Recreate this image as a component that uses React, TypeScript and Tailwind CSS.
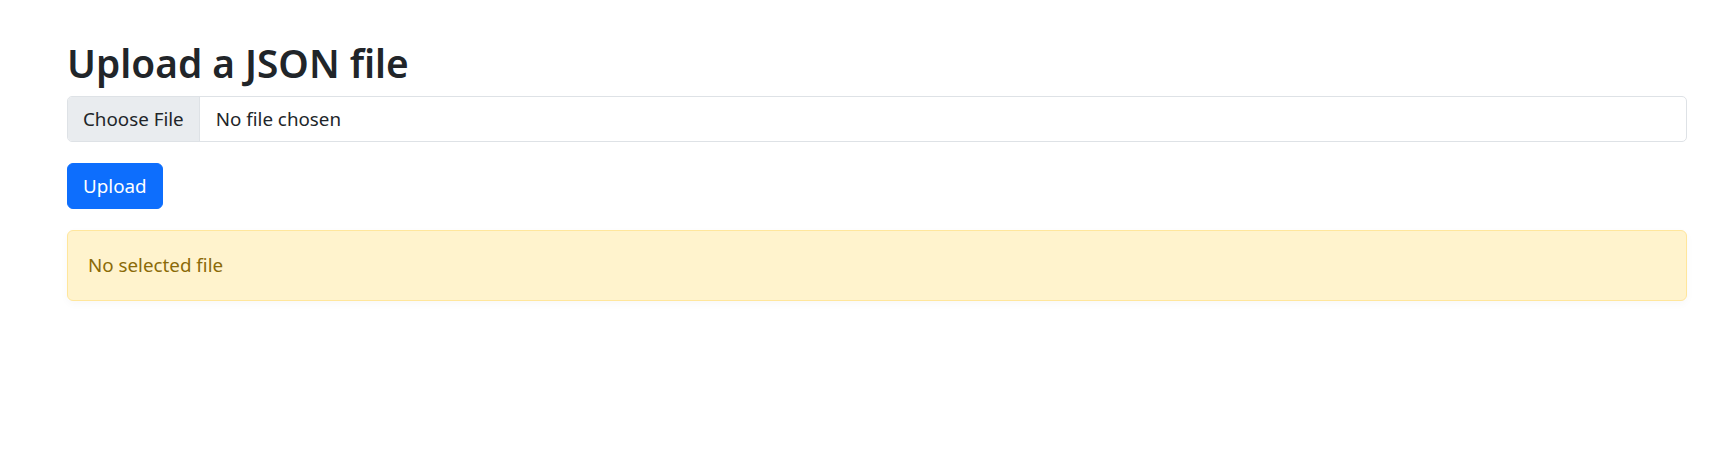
import React from "react";

export default function App() {
  return (
    <div
      className="min-h-[458px] bg-white pl-[67px] pr-[45px] pt-[40px] text-[#212529]"
      style={{ fontFamily: '"Noto Sans", "Open Sans", sans-serif' }}
    >
      <h2 className="mb-[10px] text-[38.8px] font-semibold leading-[46px] text-[#212529]">
        Upload a JSON file
      </h2>
      <div className="flex h-[46px] w-full items-stretch overflow-hidden rounded-[5px] border border-[#dee2e6] bg-white text-[18.8px]">
        <div className="flex items-center border-r border-[#dee2e6] bg-[#e9ecef] px-[15px] text-[#212529]">
          Choose File
        </div>
        <div className="flex items-center pl-[16px] text-[#212529]">No file chosen</div>
      </div>
      <button className="mt-[21px] flex h-[46px] items-center rounded-[6px] border border-[#0d6efd] bg-[#0d6efd] px-[15px] text-[18.8px] text-white">
        Upload
      </button>
      <div className="mt-[21px] flex h-[71px] items-center rounded-[6px] border border-[#ffe69c] bg-[#fff3cd] px-[20px] text-[18.8px] text-[#8a6a08] shadow-[0_3px_8px_rgba(0,0,0,0.03)]">
        No selected file
      </div>
    </div>
  );
}
